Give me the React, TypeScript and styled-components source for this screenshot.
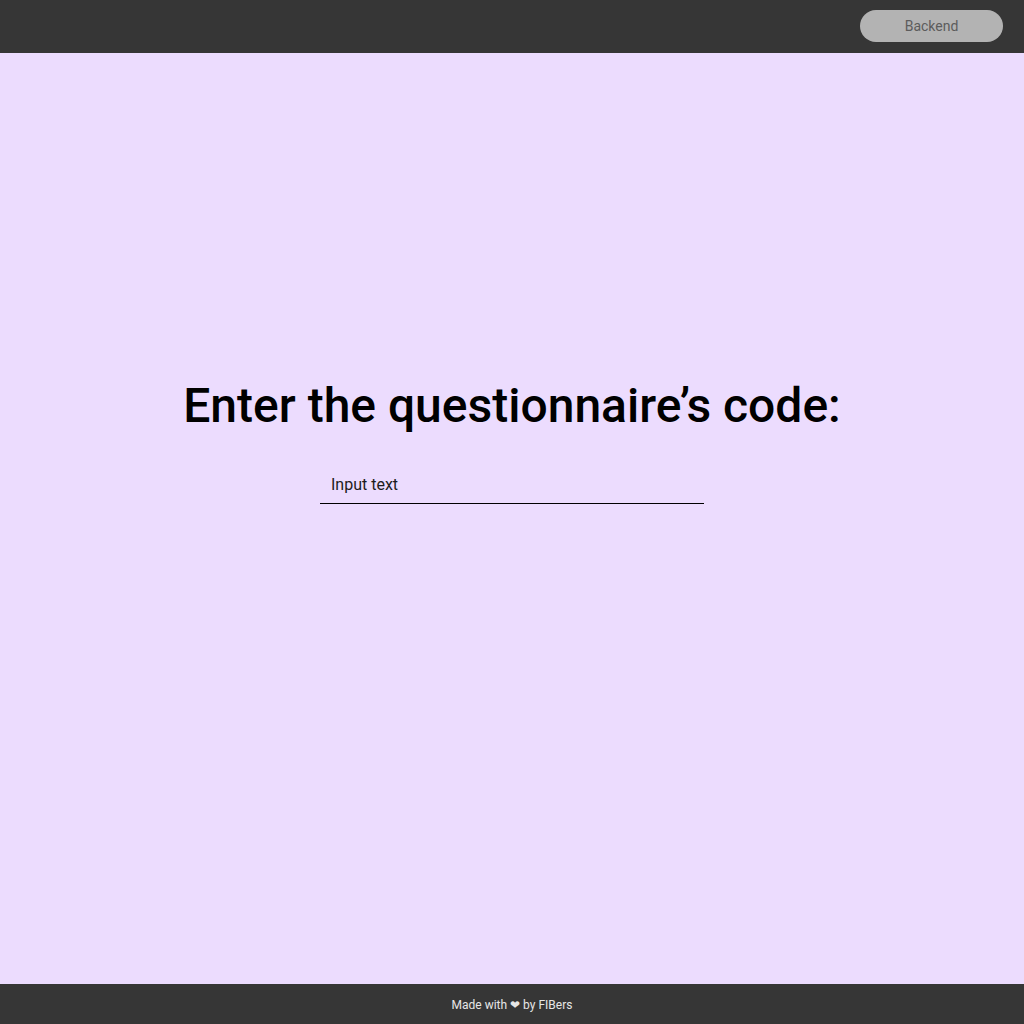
import React, { useState } from 'react'
import styled, { createGlobalStyle } from 'styled-components'

const GlobalStyle = createGlobalStyle`
    html, body {
        margin: 0;
        padding: 0;
        height: 100%;
    }
    body {
        font-family: Roboto, "Liberation Sans", sans-serif;
        background: #ecdcfe;
    }
    #root {
        height: 100%;
    }
`

export default function App() {
    const [code, setCode] = useState<string>('')

    return (
        <Page>
            <GlobalStyle />
            <Header>
                <BackendButton type="button">Backend</BackendButton>
            </Header>
            <Main>
                <Title>Enter the questionnaire’s code:</Title>
                <CodeInput
                    value={code}
                    placeholder="Input text"
                    onChange={(e) => setCode(e.target.value)}
                />
            </Main>
            <Footer>Made with ❤ by FIBers</Footer>
        </Page>
    )
}

const Page = styled.div`
    display: flex;
    flex-direction: column;
    min-height: 100vh;
`

const Header = styled.header`
    height: 53px;
    background: #363636;
    display: flex;
    align-items: flex-start;
    justify-content: flex-end;
    padding: 10px 21px 0;
    box-sizing: border-box;
`

const BackendButton = styled.button`
    width: 143px;
    height: 32px;
    border: none;
    border-radius: 16px;
    background: #b3b3b3;
    color: #5c5c5c;
    font-family: Roboto, "Liberation Sans", sans-serif;
    font-size: 14px;
    cursor: pointer;
`

const Main = styled.main`
    flex: 1;
    display: flex;
    flex-direction: column;
    align-items: center;
    padding-top: 323px;
`

const Title = styled.h1`
    margin: 0;
    font-size: 48px;
    font-weight: 500;
    color: #000;
    line-height: 60px;
`

const CodeInput = styled.input`
    margin-top: 26px;
    width: 384px;
    height: 42px;
    box-sizing: border-box;
    padding: 4px 11px 0;
    border: none;
    border-bottom: 1px solid #000;
    background: transparent;
    font-family: Roboto, "Liberation Sans", sans-serif;
    font-size: 16px;
    color: #1d1b20;
    outline: none;

    &::placeholder {
        color: #1d1b20;
        opacity: 1;
    }
`

const Footer = styled.footer`
    height: 40px;
    padding-top: 2px;
    box-sizing: border-box;
    background: #363636;
    color: #e6e6e6;
    font-size: 12px;
    display: flex;
    align-items: center;
    justify-content: center;
`
